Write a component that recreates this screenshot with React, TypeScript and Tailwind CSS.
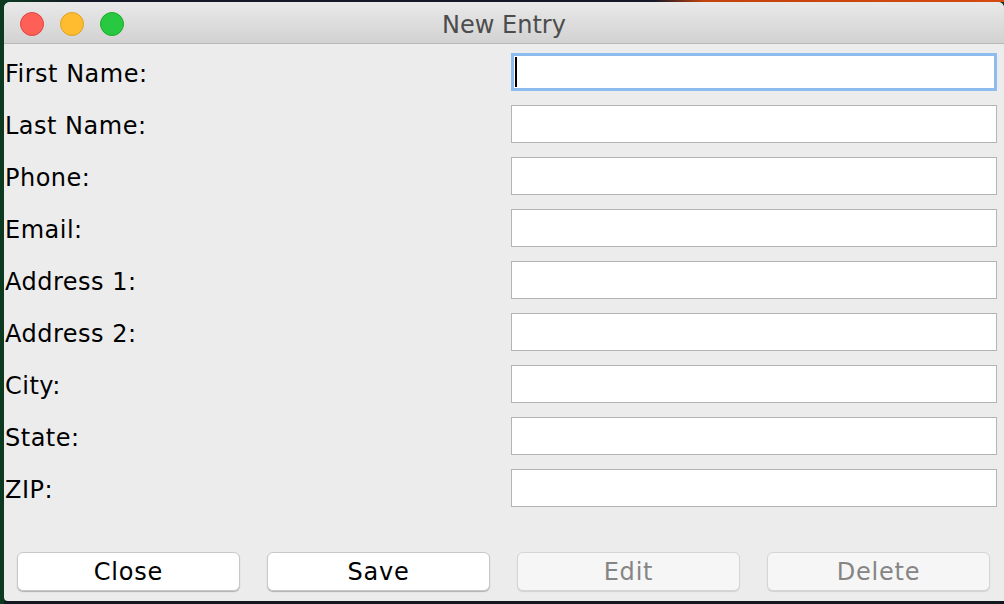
const fields = [
  "First Name:",
  "Last Name:",
  "Phone:",
  "Email:",
  "Address 1:",
  "Address 2:",
  "City:",
  "State:",
  "ZIP:",
];

const buttons = [
  { label: "Close", enabled: true },
  { label: "Save", enabled: true },
  { label: "Edit", enabled: false },
  { label: "Delete", enabled: false },
];

function TrafficLights() {
  return (
    <div className="flex gap-[16px] pl-[16px]">
      <span className="w-[24px] h-[24px] rounded-full bg-[#fe5f57] border border-[#e0443e]" />
      <span className="w-[24px] h-[24px] rounded-full bg-[#febc2e] border border-[#dea123]" />
      <span className="w-[24px] h-[24px] rounded-full bg-[#28c840] border border-[#1aab29]" />
    </div>
  );
}

function App() {
  return (
    <div
      className="w-[1004px] h-[604px] flex bg-[#0c3a21] overflow-hidden"
      style={{ fontFamily: '"DejaVu Sans", Verdana, sans-serif' }}
    >
      <div className="w-[4px] shrink-0" />
      <div className="flex-1 flex flex-col">
        <div className="h-[2px] shrink-0 bg-[linear-gradient(90deg,#0c3a21_0%,#141826_8%,#141826_65%,#c4420c_70%,#d44a10_100%)]" />
        <div className="flex-1 flex flex-col bg-[#ececec] rounded-t-[6px] rounded-bl-[4px] overflow-hidden">
          {/* title bar */}
          <div className="relative h-[42px] shrink-0 flex items-center pt-[2px] bg-gradient-to-b from-[#e9e9e9] to-[#d2d2d2] border-b border-[#b8b8b8]">
            <TrafficLights />
            <div className="absolute inset-0 pt-[4px] flex items-center justify-center text-[24px] text-[#4c4c4c]">
              New Entry
            </div>
          </div>

          {/* form */}
          <div className="flex flex-col pt-[2px] pl-[1px] pr-[7px]">
            {fields.map((f, i) => (
              <div key={f} className="h-[52px] flex items-center justify-between">
                <span className="pt-[3px] text-[24px] tracking-[0.5px] text-black">{f}</span>
                <div
                  className={
                    i === 0
                      ? "w-[486px] h-[38px] bg-white border-[3px] border-[#8fbcf0] flex items-center pl-[1px]"
                      : "w-[486px] h-[38px] bg-white border border-[#b4b4b4]"
                  }
                >
                  {i === 0 && <span className="w-[2px] h-[30px] bg-black" />}
                </div>
              </div>
            ))}
          </div>

          {/* buttons */}
          <div className="mt-auto flex gap-[27px] pl-[13px] pr-[14px] pb-[10px]">
            {buttons.map((b) => (
              <div
                key={b.label}
                className={
                  b.enabled
                    ? "w-[223px] h-[39px] flex items-center justify-center rounded-[6px] bg-white border border-[#c9c9c9] shadow-[0_1px_1px_rgba(0,0,0,0.25)] text-[24px] tracking-[0.8px] text-black"
                    : "w-[223px] h-[39px] flex items-center justify-center rounded-[6px] bg-[#f6f6f6] border border-[#d6d6d6] shadow-[0_1px_1px_rgba(0,0,0,0.12)] text-[24px] tracking-[0.8px] text-[#858585]"
                }
              >
                {b.label}
              </div>
            ))}
          </div>
        </div>
        <div className="h-[3px] shrink-0 bg-[#15171e]" />
      </div>
    </div>
  );
}

export default App;
